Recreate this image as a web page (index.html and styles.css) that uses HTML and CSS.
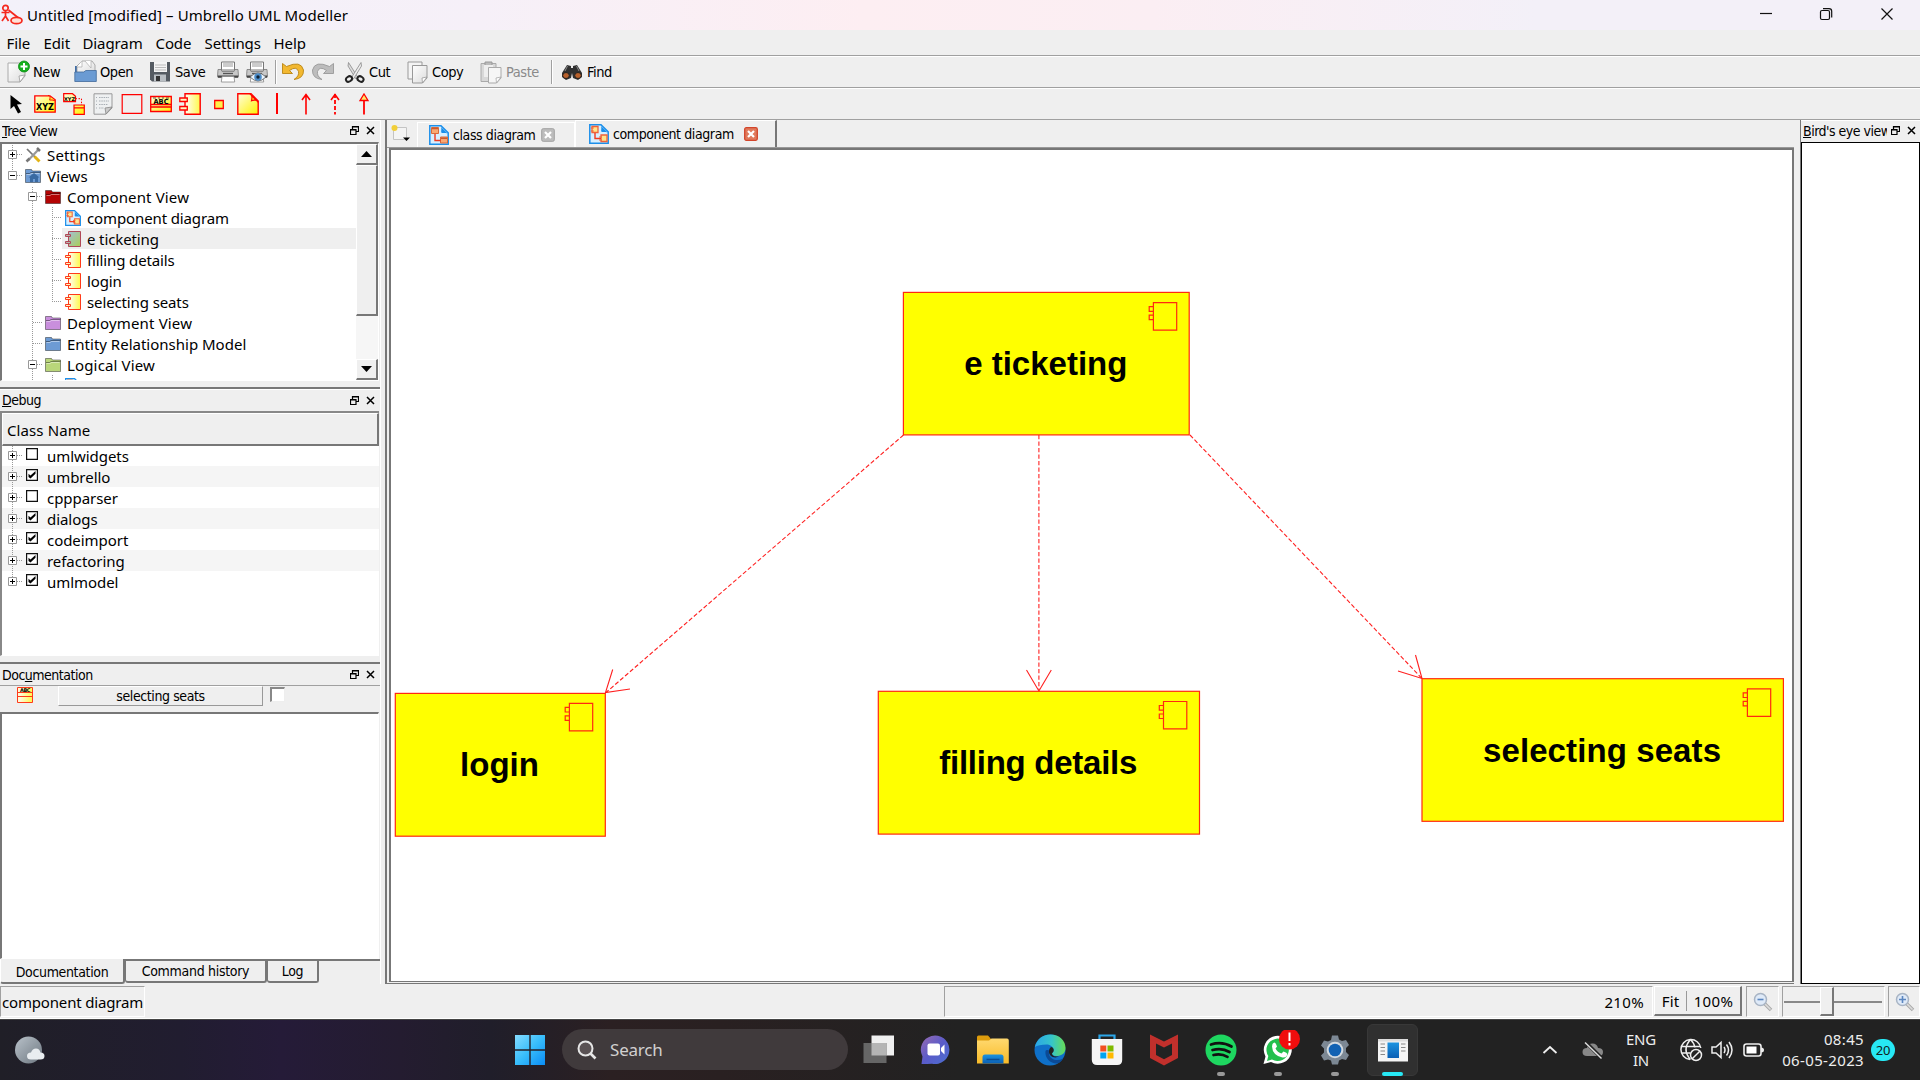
FILE: index.html
```html
<!DOCTYPE html>
<html lang="en">
<head>
<meta charset="utf-8">
<title>Untitled [modified] – Umbrello UML Modeller</title>
<link rel="stylesheet" href="styles.css">
</head>
<body>
<svg class="defs" width="0" height="0">
  <defs>
    <linearGradient id="gy" x1="0" y1="0" x2="1" y2="1"><stop offset="0" stop-color="#fffde0"/><stop offset="1" stop-color="#fff200"/></linearGradient>
    <linearGradient id="gc" x1="0" y1="0" x2="1" y2="0"><stop offset=".2" stop-color="#fffbd8"/><stop offset="1" stop-color="#fff94a"/></linearGradient>
    <linearGradient id="gp" x1="0" y1="0" x2="1" y2="1"><stop offset="0" stop-color="#fff"/><stop offset="1" stop-color="#dcdcdc"/></linearGradient>
    <linearGradient id="gsel" x1="0" y1="0" x2="1" y2="1"><stop offset="0" stop-color="#a3bfd8"/><stop offset="1" stop-color="#a9cf55"/></linearGradient>
    <linearGradient id="gwin" x1="0" y1="0" x2="1" y2="1"><stop offset="0" stop-color="#85dcff"/><stop offset=".5" stop-color="#38bdfb"/><stop offset="1" stop-color="#0a8cf5"/></linearGradient>
    <linearGradient id="gfold" x1="0" y1="0" x2="0" y2="1"><stop offset="0" stop-color="#ffd970"/><stop offset="1" stop-color="#f9bb28"/></linearGradient>
    <linearGradient id="gblue" x1="0" y1="0" x2="0" y2="1"><stop offset="0" stop-color="#1c93e0"/><stop offset="1" stop-color="#0a5fb4"/></linearGradient>
    <linearGradient id="gedge" x1="0" y1="0" x2="1" y2="0"><stop offset="0" stop-color="#2aa6e8"/><stop offset=".55" stop-color="#36c5c9"/><stop offset="1" stop-color="#67dc55"/></linearGradient>
    <linearGradient id="gchat" x1="0" y1="0" x2="1" y2="1"><stop offset="0" stop-color="#9a6bb0"/><stop offset=".5" stop-color="#5a5bc9"/><stop offset="1" stop-color="#4b6fd0"/></linearGradient>
    <linearGradient id="gmoon" x1="0" y1="0" x2="1" y2="1"><stop offset="0" stop-color="#b9c2ca"/><stop offset="1" stop-color="#6d7780"/></linearGradient>
  </defs>
  <symbol id="folder" viewBox="0 0 16 16"><path d="M.5 14.5v-13h6l1 1.5h8v11.500z" fill="currentColor" stroke="#000" stroke-opacity=".4"/><path d="M1 5.500h3.500l1.500-1h9.500" fill="none" stroke="#000" stroke-opacity=".4"/><path d="M1.500 6.500h3.500l1.500-1h8" fill="none" stroke="#fff" stroke-opacity=".45"/></symbol>
  <symbol id="comp" viewBox="0 0 16 16"><path d="M3.500.5h12v15h-12z" fill="url(#gc)" stroke="#ff3a1a"/><path d="M.5 3.500h5v2h-5zM.5 10.500h5v2h-5z" fill="#fff3c0" stroke="#ff3a1a"/></symbol>
  <symbol id="compsel" viewBox="0 0 16 16"><path d="M3.500.5h12v15h-12z" fill="url(#gsel)" stroke="#b04858"/><path d="M.5 3.500h5v2h-5zM.5 10.500h5v2h-5z" fill="#b9b3ab" stroke="#b04858"/></symbol>
  <symbol id="cdiag" viewBox="0 0 20 20"><path d="M.8.8H12l7.200 7v11.400H.8z" fill="#d8efff" stroke="#1c8fea" stroke-width="1.500"/><path d="M11 1c2.500 1 .5 6 1.500 6.800 1.500.8 5-.5 6.700 1.200z" fill="#1c8fea"/><path d="M3 2.500h6v6H3zM12 11h6v6.500h-6z" fill="#ffe48c" stroke="#f0623a" stroke-width="1.300"/><path d="M6 9v5.500h6" fill="none" stroke="#f03a20" stroke-width="1.400"/><path d="M1.800 4h3M1.800 7h3M10 13h3M10 16h3" stroke="#f0623a" stroke-width="1.200"/></symbol>
  <symbol id="kdiag" viewBox="0 0 20 20"><path d="M.8.8H12l7.200 7v11.400H.8z" fill="#d8efff" stroke="#1c8fea" stroke-width="1.500"/><path d="M11 1c2.500 1 .5 6 1.500 6.800 1.500.8 5-.5 6.700 1.200z" fill="#1c8fea"/><path d="M2.500 2.500h7v6h-7zM11.500 12h7v6h-7z" fill="#f9a873" stroke="#d96a3a"/><path d="M3 3.500h6M12 13.200h6" stroke="#c95a30" stroke-width="1.500"/><path d="M6 9v6.500h5.500" fill="none" stroke="#f03a20" stroke-width="1.400"/></symbol>
  <symbol id="plus" viewBox="0 0 9 9"><path d="M.5.5h8v8h-8z" fill="#fff" stroke="#999"/><path d="M2 4.500h5M4.500 2v5" stroke="#000"/></symbol>
  <symbol id="minus" viewBox="0 0 9 9"><path d="M.5.5h8v8h-8z" fill="#fff" stroke="#999"/><path d="M2 4.500h5" stroke="#000"/></symbol>
  <symbol id="float" viewBox="0 0 9 9"><path d="M2.500 3V.5h6v5H6M2.500 1h6" fill="none" stroke="#000" stroke-width="1.200"/><path d="M.5 3.500h5.500v5H.5zM.5 4h5.500" fill="none" stroke="#000" stroke-width="1.200"/></symbol>
  <symbol id="cross" viewBox="0 0 9 9"><path d="M1 1l7 7M8 1L1 8" stroke="#000" stroke-width="1.500"/></symbol>
  <symbol id="check" viewBox="0 0 12 12"><path d="M.6.6h10.800v10.800H.6z" fill="#fff" stroke="#111" stroke-width="1.200"/><path d="M2.500 4.800v3.200l2 1.500L9.500 4.700V2L4.500 6.500z" fill="#000"/></symbol>
  <symbol id="uncheck" viewBox="0 0 12 12"><path d="M.6.6h10.800v10.800H.6z" fill="#fff" stroke="#111" stroke-width="1.200"/></symbol>
  <symbol id="printer" viewBox="0 0 22 22"><path d="M4.500 1h13v8h-13z" fill="#fff" stroke="#777"/><path d="M6 3h10M6 5h10" stroke="#999"/><path d="M1 8.500h3l1 2h12l1-2h3l.5 7h-21z" fill="#c8c8c8" stroke="#777" stroke-width=".8"/><path d="M.8 14.500h20.400v2.300H.8z" fill="#444"/><path d="M5 15.500h12l.7 5.500H4.300z" fill="#fff" stroke="#888" stroke-width=".8"/><path d="M6 12.500h10" stroke="#555" stroke-width="1.300"/></symbol>
  <symbol id="note" viewBox="0 0 22 22"><path d="M.8.8H14L21.200 8v13.200H.8z" fill="url(#gy)" stroke="red" stroke-width="1.400"/><path d="M13 .8c3 1 2 4 1.500 7 2-1 6-1 6.700 1.500z" fill="#ffee20" stroke="red" stroke-width="1.200"/></symbol>
  <symbol id="lens" viewBox="0 0 20 20"><path d="M11.500 11.500l6.500 6.500" stroke="#aaa" stroke-width="3.600"/><path d="M12 12l5.500 5.500" stroke="#ddd" stroke-width="1.600"/><circle cx="7.500" cy="7.500" r="6" fill="#dfeaf8" stroke="#a8b4c4" stroke-width="1.500"/></symbol>
</svg>

<header class="titlebar">
  <svg class="logo" width="22" height="22" viewBox="0 0 22 22" fill="none" stroke="#f5281e" stroke-width="1.700"><circle cx="4.500" cy="4" r="2.700"/><path d="M4.500 7v5M.5 8.500h8M1 17l3.500-5 3 5M7.500 6l10 8"/><ellipse cx="15.500" cy="16.500" rx="5.500" ry="3.200" fill="#ffe0d8"/></svg>
  <span class="title">Untitled [modified] – Umbrello UML Modeller</span>
  <svg class="wbtn" width="160" height="30" viewBox="0 0 160 30" fill="none" stroke="#111" stroke-width="1.200"><path d="M20 13.500h12"/><path d="M83 8.700h6q2.700 0 2.700 2.700v6"/><rect x="80.500" y="10.500" width="9" height="9" rx="1.500"/><path d="M141.500 8.500l11 11M152.500 8.500l-11 11"/></svg>
</header>

<nav class="menubar"><span>File</span><span>Edit</span><span>Diagram</span><span>Code</span><span>Settings</span><span>Help</span></nav>

<div class="toolbar main">
  <svg width="24" height="24" viewBox="0 0 24 24"><path d="M1 3h17v13l-5 6H1z" fill="url(#gp)" stroke="#aaa"/><path d="M18 15l-6 1 1 6z" fill="#fff" stroke="#999" stroke-width=".8"/><circle cx="17" cy="6.500" r="5.500" fill="#14b01c" stroke="#0a8a12" stroke-width=".8"/><path d="M17 3v7M13.500 6.500h7" stroke="#fff" stroke-width="2"/></svg><span>New</span>
  <svg width="24" height="24" viewBox="0 0 24 24"><path d="M1 21V6h6l2 3h11v12z" fill="#3f6ea8"/><path d="M3 14V6l5-5h10l3 4v9z" fill="url(#gp)" stroke="#999" stroke-width=".8"/><path d="M8 1v6H3M11 1l6 7V1" fill="#fff" stroke="#aaa" stroke-width=".7"/><path d="M.8 21.500V12h9l2-1.500h10.500v11z" fill="#6b9bd3" stroke="#41699b" stroke-width=".8"/></svg><span>Open</span>
  <svg width="24" height="24" viewBox="0 0 24 24"><path d="M1 2h20v19.500H3l-2-2z" fill="#555b62"/><path d="M5 2h13v10H5z" fill="#f4f4f4"/><path d="M6 5h11M6 7.500h11M6 10h11" stroke="#bbb"/><path d="M5 14.500h12v7H5z" fill="#b9bec3"/><path d="M7 16h4v5H7z" fill="#333"/></svg><span>Save</span>
  <svg width="22" height="22"><use href="#printer"/></svg>
  <svg width="22" height="22" viewBox="0 0 22 22"><use href="#printer" width="22" height="22"/><path d="M4 16q8-8 16 0-8 8-16 0z" fill="#e8f2fb" stroke="#555" stroke-width=".8"/><circle cx="12" cy="16" r="3.800" fill="#4c8cc8"/><circle cx="12" cy="16" r="1.700" fill="#123"/></svg>
  <i class="sep"></i>
  <svg width="24" height="22" viewBox="0 0 24 22"><path d="M1.500 2.500v10h10L8.500 9.500q7-5 9 1 1 4.500-4.500 8 10-1 9.500-9.500Q20-1 5.500 5.500z" fill="#f2b830" stroke="#b98412" stroke-width=".9"/></svg>
  <svg width="24" height="22" viewBox="0 0 24 22"><path d="M22.500 2.500v10h-10l3-3q-7-5-9 1-1 4.500 4.500 8Q1 17.500 1.500 9 4-1 18.500 5.500z" fill="#bdbdbd" stroke="#999" stroke-width=".9"/></svg>
  <svg width="22" height="23" viewBox="0 0 22 23"><path d="M4.500 1.500l9.500 15-2 1.500L4 5z" fill="#ddd" stroke="#888" stroke-width=".8"/><path d="M17 1.500l-9.500 15 2 1.500L17.500 5z" fill="#eee" stroke="#888" stroke-width=".8"/><ellipse cx="5" cy="18" rx="3.200" ry="2.500" transform="rotate(-35 5 18)" fill="none" stroke="#222" stroke-width="2"/><ellipse cx="16.500" cy="18" rx="3.200" ry="2.500" transform="rotate(35 16.500 18)" fill="none" stroke="#222" stroke-width="2"/></svg><span>Cut</span>
  <svg width="22" height="23" viewBox="0 0 22 23"><path d="M1 1h14v17H1z" fill="#f4f4f4" stroke="#999"/><path d="M5.500 4.500H20V17l-4.500 5h-10z" fill="url(#gp)" stroke="#999"/><path d="M20 16l-5 1 .5 5z" fill="#fff" stroke="#999" stroke-width=".8"/></svg><span>Copy</span>
  <svg width="22" height="23" viewBox="0 0 22 23"><path d="M1 2.500h15v18H1z" fill="#d8d8d8" stroke="#aaa"/><path d="M5 1h7v4H5z" fill="#bbb" stroke="#999"/><path d="M4 4h9v12H4z" fill="#eee"/><path d="M8.500 6.500H21V17l-4.500 5h-8z" fill="#f6f6f6" stroke="#aaa"/><path d="M21 16l-5 1 .5 5z" fill="#fff" stroke="#aaa" stroke-width=".8"/></svg><span class="off">Paste</span>
  <i class="sep"></i>
  <svg width="22" height="18" viewBox="0 0 22 18"><path d="M1 10L6 2l4 1v2h2V3l4-1 5 8v4l-4 3-5-2-1-5-1 5-5 2-4-3z" fill="#303030"/><path d="M6.500 3L4 8M15.500 3L18 8" stroke="#888"/><ellipse cx="5" cy="12.500" rx="3.300" ry="3" fill="#b8612c" stroke="#222"/><ellipse cx="17" cy="12.500" rx="3.300" ry="3" fill="#b8612c" stroke="#222"/></svg><span>Find</span>
</div>

<div class="toolbar uml">
  <svg viewBox="0 0 22 22"><path d="M5.500 2v14l3.500-3 4 7.500 3-1.500-4-7.500 5-.5z" fill="#000"/></svg>
  <svg viewBox="0 0 22 22"><path d="M.8 2.800H16l5.200 4v12.400H.8z" fill="url(#gy)" stroke="red" stroke-width="1.300"/><path d="M14 2.500c3 0 2 3 1.500 4.500 2 0 5 0 5.700 1" fill="#ffee20" stroke="red"/><text x="11" y="17" text-anchor="middle" textLength="18" lengthAdjust="spacingAndGlyphs" class="glyphtext">XYZ</text></svg>
  <svg viewBox="0 0 22 22"><path d="M.7.700H9.500l3 2.500v5.500H.7zM11 12h10.300v9.300H11zM11 14.800h10.300" fill="url(#gy)" stroke="red" stroke-width="1.200"/><path d="M12.500 5.700h6V12" fill="none" stroke="red" stroke-dasharray="1.500 1.500"/><text x="6.500" y="8" text-anchor="middle" class="glyphtext tiny">XYZ</text></svg>
  <svg viewBox="0 0 22 22"><path d="M2 .8h18V15l-6 6.200H2z" fill="#eef0f1" stroke="#999"/><path d="M20 14l-7 1 1 6z" fill="#ccc" stroke="#888" stroke-width=".8"/><path d="M7 4.500h10M7 8h10M7 11.500h9M7 15h5M4 4.500h1M4 8h1M4 11.500h1M4 15h1" stroke="#a8aeb4" stroke-dasharray="1.500 .8"/></svg>
  <svg viewBox="0 0 22 22"><path d="M1.200 1.700h19.600v18.600H1.200z" fill="none" stroke="red" stroke-width="1.200"/></svg>
  <svg viewBox="0 0 22 22"><path d="M.7 3.500h20.600v15H.7zM.7 11.500h20.600M.7 14h20.600" fill="url(#gy)" stroke="red" stroke-width="1.300"/><text x="11" y="10.500" text-anchor="middle" textLength="15" lengthAdjust="spacingAndGlyphs" class="glyphtext small">ABC</text><path d="M3 5h3M16 5h3M8 5h2M12 5h2" stroke="#333" stroke-width=".8"/></svg>
  <svg viewBox="0 0 22 22"><path d="M6 .8h15.200v20.400H6z" fill="url(#gc)" stroke="red" stroke-width="1.400"/><path d="M.8 5h7.500v3.500H.8zM.8 13.500h7.500V17H.8z" fill="#fff6c0" stroke="red" stroke-width="1.300"/></svg>
  <svg viewBox="0 0 22 22"><path d="M6.700 7.500h8.600v8H6.700z" fill="#fff04a" stroke="red" stroke-width="1.300"/></svg>
  <svg viewBox="0 0 22 22"><use href="#note"/></svg>
  <svg viewBox="0 0 22 22"><path d="M11 0v21" stroke="red" stroke-width="2"/></svg>
  <svg viewBox="0 0 22 22"><path d="M11 1v20.500M7 7L11 1.500 15 7" fill="none" stroke="red" stroke-width="1.600"/></svg>
  <svg viewBox="0 0 22 22"><path d="M11 1v20.500" stroke="red" stroke-width="1.800" stroke-dasharray="4 2"/><path d="M7 7L11 1.500 15 7" fill="none" stroke="red" stroke-width="1.600"/></svg>
  <svg viewBox="0 0 22 22"><path d="M11 8v13.500" stroke="red" stroke-width="1.800"/><path d="M7 7.500L11 1l4 6.500z" fill="#ffe96a" stroke="red" stroke-width="1.300"/></svg>
</div>

<main class="work">
  <aside class="left">
    <div class="dockhead tvh"><span><u>T</u>ree View</span><svg width="9" height="9"><use href="#float"/></svg><svg width="9" height="9"><use href="#cross"/></svg></div>
    <div class="treebox">
      <div class="tree">
        <svg class="guides" width="60" height="237" viewBox="2 144 60 237"><path d="M12.500 145v31M32.500 187v194M52.500 207v95M52.500 375v6M17 154.500h5M17 175.500h5M37 196.500h5M52 217.500h10M52 238.500h10M52 259.500h10M52 280.500h10M52 301.500h10M33 322.500h9M33 343.500h9M37 364.500h5" stroke="#999" stroke-dasharray="1 1"/><use href="#plus" x="8" y="150" width="9" height="9"/><use href="#minus" x="8" y="171" width="9" height="9"/><use href="#minus" x="28" y="192" width="9" height="9"/><use href="#minus" x="28" y="360" width="9" height="9"/></svg>
        <div class="rows">
          <div class="row d0"><svg width="16" height="16" viewBox="0 0 16 16"><path d="M2 2l12 12" stroke="#777" stroke-width="1.700"/><path d="M14 2L3 13.500" stroke="#999" stroke-width="2.200"/><path d="M9.500 9.500l5 5" stroke="#e3b416" stroke-width="3"/><path d="M1.500 14.500l3-3M12 1l3 3" stroke="#777" stroke-width="2.500"/></svg><span>Settings</span></div>
          <div class="row d0 c-blue"><svg width="16" height="16" viewBox="0 0 16 16"><use href="#folder"/><path d="M5 14V9.500H3.500L9 5l5.500 4.500H13V14h-3v-3H8v3z" fill="#3a6aa2"/></svg><span>Views</span></div>
          <div class="row d1 c-red"><svg width="16" height="16"><use href="#folder"/></svg><span>Component View</span></div>
          <div class="row d2"><svg width="16" height="16"><use href="#cdiag"/></svg><span>component diagram</span></div>
          <div class="row d2 sel"><svg width="16" height="16"><use href="#compsel"/></svg><span>e ticketing</span></div>
          <div class="row d2"><svg width="16" height="16"><use href="#comp"/></svg><span>filling details</span></div>
          <div class="row d2"><svg width="16" height="16"><use href="#comp"/></svg><span>login</span></div>
          <div class="row d2"><svg width="16" height="16"><use href="#comp"/></svg><span>selecting seats</span></div>
          <div class="row d1 c-purple"><svg width="16" height="16"><use href="#folder"/></svg><span>Deployment View</span></div>
          <div class="row d1 c-blue"><svg width="16" height="16"><use href="#folder"/></svg><span class="tight">Entity Relationship Model</span></div>
          <div class="row d1 c-green"><svg width="16" height="16"><use href="#folder"/></svg><span>Logical View</span></div>
          <div class="row d2"><svg width="16" height="16"><use href="#kdiag"/></svg><span>class diagram</span></div>
        </div>
      </div>
      <div class="scroll"><b><svg width="11" height="6"><path d="M0 6L5.500 0 11 6z"/></svg></b><b class="thumb"></b><i></i><b><svg width="11" height="6"><path d="M0 0L5.500 6 11 0z"/></svg></b></div>
    </div>
    <div class="dockhead dbh"><span><u>D</u>ebug</span><svg width="9" height="9"><use href="#float"/></svg><svg width="9" height="9"><use href="#cross"/></svg></div>
    <div class="debugbox">
      <div class="colhead">Class Name</div>
      <div class="tree">
        <svg class="guides" width="24" height="147" viewBox="0 0 24 147"><path d="M10.500 1v138M15 10.500h5M15 31.500h5M15 52.500h5M15 73.500h5M15 94.500h5M15 115.500h5M15 136.500h5" stroke="#999" stroke-dasharray="1 1"/><use href="#plus" x="6" y="6" width="9" height="9"/><use href="#plus" x="6" y="27" width="9" height="9"/><use href="#plus" x="6" y="48" width="9" height="9"/><use href="#plus" x="6" y="69" width="9" height="9"/><use href="#plus" x="6" y="90" width="9" height="9"/><use href="#plus" x="6" y="111" width="9" height="9"/><use href="#plus" x="6" y="132" width="9" height="9"/></svg>
        <div class="rows striped">
          <div class="row"><svg width="12" height="12"><use href="#uncheck"/></svg><span>umlwidgets</span></div>
          <div class="row"><svg width="12" height="12"><use href="#check"/></svg><span>umbrello</span></div>
          <div class="row"><svg width="12" height="12"><use href="#uncheck"/></svg><span>cppparser</span></div>
          <div class="row"><svg width="12" height="12"><use href="#check"/></svg><span>dialogs</span></div>
          <div class="row"><svg width="12" height="12"><use href="#check"/></svg><span>codeimport</span></div>
          <div class="row"><svg width="12" height="12"><use href="#check"/></svg><span>refactoring</span></div>
          <div class="row"><svg width="12" height="12"><use href="#check"/></svg><span>umlmodel</span></div>
        </div>
      </div>
    </div>
    <div class="dockhead doh"><span>Doc<u>u</u>mentation</span><svg width="9" height="9"><use href="#float"/></svg><svg width="9" height="9"><use href="#cross"/></svg></div>
    <div class="docrow"><svg width="16" height="16" viewBox="0 0 16 16"><path d="M.5.5h15v15H.5zM.5 5.500h15M.5 9.500h15" fill="url(#gc)" stroke="#ff3a1a"/><text x="8" y="4.800" text-anchor="middle" class="glyphtext tiny">ABC</text></svg><span class="docname">selecting seats</span><i class="box"></i></div>
    <div class="doctext"></div>
    <div class="tabs"><span class="on">Documentation</span><span>Command history</span><span>Log</span></div>
  </aside>

  <section class="center">
    <div class="dtabs">
      <svg width="20" height="20" viewBox="0 0 20 20"><path d="M2.500 3.500h13v10l-2 2h-11z" fill="#f4f4f4" stroke="#c4c4c4"/><circle cx="3.500" cy="4" r="3" fill="#f2cf38"/><path d="M12 13.500h7l-3.500 3.500z"/></svg>
      <div class="dtab"><svg width="20" height="20"><use href="#kdiag"/></svg><span>class diagram</span><svg width="14" height="14" viewBox="0 0 14 14"><rect x=".7" y=".7" width="12.600" height="12.600" rx="1.500" fill="#bdbdbd" stroke="#a0a0a0"/><path d="M4 4l6 6M10 4l-6 6" stroke="#fff" stroke-width="2.200"/></svg></div>
      <div class="dtab on"><svg width="20" height="20"><use href="#cdiag"/></svg><span>component diagram</span><svg width="14" height="14" viewBox="0 0 14 14"><rect x=".7" y=".7" width="12.600" height="12.600" rx="1.500" fill="#e07a5c" stroke="#d2452a" stroke-width="1.300"/><path d="M4 4l6 6M10 4l-6 6" stroke="#fff" stroke-width="2.200"/></svg></div>
    </div>
    <div class="canvas">
      <svg width="1401" height="831" viewBox="391 150 1401 831">
        <g fill="none" stroke="#ff2020" stroke-width="1.100">
          <path stroke-dasharray="4.300 2.200" d="M903.500 435L606 692.500M1038.900 435v255M1190 435l232 243.500"/>
          <path d="M612.700 669.500L605.500 692.500l24.500-3.500M1026.500 670l12.400 21 12.400-21M1415.500 655l6.500 23.500-24-7.500"/>
        </g>
        <g fill="#ff0" stroke="#ff2a10" stroke-width="1.200">
          <rect x="903.400" y="292.400" width="285.800" height="142.500"/>
          <rect x="395.300" y="693.400" width="210" height="142.800"/>
          <rect x="878.300" y="691.300" width="321.200" height="142.800"/>
          <rect x="1422" y="678.700" width="361.400" height="142.600"/>
          <path id="cg" d="M1153.400 302.700h23.300v27.400h-23.300zM1149.200 306.700h4.200v4.600h-4.200zM1149.200 315.200h4.200v4.500h-4.200z"/>
          <use href="#cg" x="-584" y="400.700"/><use href="#cg" x="10.100" y="398.800"/><use href="#cg" x="594" y="386.200"/>
        </g>
        <g class="cname" text-anchor="middle">
          <text x="1045.800" y="374.600">e ticketing</text><text x="499.500" y="775.600">login</text><text x="1038.300" y="773.600" textLength="198">filling details</text><text x="1602" y="761.600" textLength="238">selecting seats</text>
        </g>
      </svg>
    </div>
  </section>

  <aside class="right">
    <div class="dockhead bvh"><span><u>B</u>ird's eye view</span><svg width="9" height="9"><use href="#float"/></svg><svg width="9" height="9"><use href="#cross"/></svg></div>
    <div class="bird"></div>
  </aside>
</main>

<footer class="status">
  <span class="cell name">component diagram</span>
  <span class="cell zoom">210%</span>
  <span class="fit"><span>Fit</span><span>100%</span></span>
  <span class="cell zo"><svg width="20" height="20" viewBox="0 0 20 20"><use href="#lens"/><path d="M4.500 7.500h6" stroke="#5b86c0" stroke-width="1.600"/></svg></span>
  <span class="cell slider"><i></i></span>
  <span class="cell zi"><svg width="20" height="20" viewBox="0 0 20 20"><use href="#lens"/><path d="M4 7.500h7M7.500 4v7" stroke="#5b86c0" stroke-width="1.600"/></svg></span>
</footer>

<div class="taskbar">
  <div class="weather"><svg width="32" height="32" viewBox="0 0 32 32"><circle cx="14.500" cy="16" r="13.500" fill="url(#gmoon)"/><path d="M17 25.500q-4 0-4-3.500t4-3.500q1.500-4 5-4t4.500 4q4 0 4 3.500t-4 3.500z" fill="#e9edf0"/></svg></div>
  <div class="app"><svg width="30" height="30" viewBox="0 0 30 30" fill="url(#gwin)"><path d="M0 0h14.300v14.300H0zM15.700 0H30v14.300H15.700zM0 15.700h14.300V30H0zM15.700 15.700H30V30H15.700z"/></svg></div>
  <div class="search"><svg width="20" height="20" viewBox="0 0 20 20" fill="none" stroke="#e6e6e6" stroke-width="2"><circle cx="8.500" cy="8.500" r="7" fill="#5a5254"/><path d="M13.500 13.500l5 5" stroke-width="2.600"/></svg><span>Search</span></div>
  <div class="apps">
    <div class="app"><svg width="32" height="32" viewBox="0 0 32 32"><path d="M8.500 1.500H31v20H8.500z" fill="#f0f0f0"/><path d="M.5 9h23v20H.5z" fill="#666"/><path d="M8.500 9h15v12.500h-15z" fill="#b5b5b5"/></svg></div>
    <div class="app"><svg width="32" height="32" viewBox="0 0 32 32"><path d="M1.500 30l1-7.500A14.300 14.300 0 1 1 12 29.700q-5 .3-10.500.3z" fill="url(#gchat)"/><rect x="7.500" y="9.500" width="12.500" height="12" rx="2" fill="#fff"/><path d="M21 14l3.500-3.500v10L21 17z" fill="#fff"/></svg></div>
    <div class="app"><svg width="32" height="32" viewBox="0 0 32 32"><path d="M0 8V3q0-1.500 1.500-1.500H11L14 5v5H0z" fill="#dd9c0c"/><path d="M0 6.500h12l2.500-2H30q1.800 0 1.800 2v23H0z" fill="url(#gfold)"/><path d="M5.500 29.500V23q0-2.500 2.500-2.500h16q2.500 0 2.500 2.500v6.500z" fill="url(#gblue)"/><path d="M9.500 25.500h13" stroke="#0a4d94" stroke-width="1.500"/></svg></div>
    <div class="app"><svg width="32" height="32" viewBox="0 0 32 32"><circle cx="16" cy="16" r="15.500" fill="#0f70c8"/><path d="M.8 13C3 4.500 9.500.5 16.500.5c9 0 15 6.300 15 13.500 0 6-5 8-9 8-3.500 0-5-1.500-4.500-3 1-1 1.500-1.500 1.500-3 0-3-3-5.500-7-5.500-5 0-9.500 1-11.700 2.500z" fill="url(#gedge)"/><path d="M11.500 17c-1 7 5 12.500 11 12.500 3 0 5.500-3 6.500-5-4 2-8 2-11 0-3-2.200-3.500-4.500-2.500-8-2-1-3.500-.5-4 .5z" fill="#0b4a96"/><path d="M17.500 13q3 1 2 4.500l-1.500 2c0 2 2.500 4 7 2.500-3 3-10.500 1-10-5 .2-2 1-3.500 2.500-4z" fill="#222"/></svg></div>
    <div class="app"><svg width="32" height="32" viewBox="0 0 32 32"><path d="M8.500 7V1.500h15V7" fill="none" stroke="#2ba6e8" stroke-width="2.200"/><path d="M.8 5h30.400v21q0 5-5 5H6q-5 0-5.200-5z" fill="#f5f5f5"/><path d="M9.300 11.500h6v6h-6z" fill="#f25022"/><path d="M16.500 11.500h6v6h-6z" fill="#7fba00"/><path d="M9.300 18.500h6v6h-6z" fill="#00a4ef"/><path d="M16.500 18.500h6v6h-6z" fill="#ffb900"/></svg></div>
    <div class="app"><svg width="32" height="32" viewBox="0 0 32 32"><path d="M2 .5l14 7 14-7V24l-14 7.500L2 24zM8 9.500v11.500l8 4.300 8-4.300V9.500l-8 4z" fill="#c1302c" fill-rule="evenodd"/></svg></div>
    <div class="app run"><svg width="32" height="32" viewBox="0 0 32 32"><circle cx="16" cy="16" r="15.500" fill="#1ed760"/><path d="M6 10.500q11-3.500 20.500 2M7.500 16q9.500-2.500 17 2M8.500 21q7.500-2 14 1.800" fill="none" stroke="#111" stroke-width="2.700" stroke-linecap="round"/></svg></div>
    <div class="app run"><svg class="wa" width="40" height="40" viewBox="0 0 40 40"><path d="M3.500 34l2-7.500A14 14 0 1 1 11 32z" fill="#fff"/><path d="M7 31l1.300-5A11.200 11.200 0 1 1 12 29.500z" fill="#23c04e"/><path d="M12.500 14q2-3 3.500 0l1 2.500-1.500 2q2 4 6 5l2-2q3.500 1 4 2.500-1 4-5 3.500-10-2-10.500-11z" fill="#fff"/><circle cx="29.500" cy="9" r="10.500" fill="#f00d0d"/><path d="M29.500 2.500v8.500M29.500 13v2.500" stroke="#fff" stroke-width="2"/></svg></div>
    <div class="app run"><svg width="32" height="32" viewBox="0 0 32 32"><path d="M13 1.500h6l1 4 3 1.500 4-1 3 5-3 3v4l3 3-3 5-4-1-3 1.500-1 4h-6l-1-4L9 25.500l-4 1-3-5 3-3v-4l-3-3 3-5 4 1 3-1.500z" fill="#7c8894"/><circle cx="16" cy="16" r="8.300" fill="#d3dae0"/><circle cx="16" cy="16" r="6.300" fill="#1262b3"/></svg></div>
    <div class="app run active"><svg width="32" height="32" viewBox="0 0 32 32"><path d="M1 5h30v22.500H1z" fill="#f4f4f4"/><path d="M1 5h30v2.500H1z" fill="#ddd"/><path d="M10.500 8.500H22V24H10.500z" fill="url(#gblue)"/><path d="M3.500 10H8M3.500 13.500H8M3.500 17H8M3.500 20.500H8M24 10h4.500M24 13.500h4.500M24 17h4.500" stroke="#888"/></svg></div>
  </div>
  <div class="tray">
    <svg width="16" height="12" viewBox="0 0 16 12"><path d="M1.500 9L8 3l6.500 6" fill="none" stroke="#eee" stroke-width="1.800"/></svg>
    <svg class="cloud" width="24" height="20" viewBox="0 0 24 20"><path d="M6 16q-4.500 0-4.500-4t4.500-4q1-4.500 5.500-4.500T17 8q5 0 5 4t-4 4z" fill="#888"/><path d="M4 1.500l17 17" stroke="#222" stroke-width="3.500"/><path d="M4 2.500l16.500 16" stroke="#ddd" stroke-width="1.500"/></svg>
    <span class="lang">ENG<br>IN</span>
    <svg class="net" width="24" height="24" viewBox="0 0 24 24" fill="none" stroke="#eee" stroke-width="1.500"><path d="M11 21.500A10 10 0 1 1 21.800 10M2 8.500h19M2 15h9M11.500 1.500q-9 10 0 20M11.500 1.500q4 4 4.300 8"/><circle cx="17" cy="17" r="5.500"/><path d="M13.200 20.800l7.600-7.600"/></svg>
    <svg class="vol" width="22" height="20" viewBox="0 0 22 20" fill="none" stroke="#eee" stroke-width="1.500"><path d="M1 7h4l5-4.500v15L5 13H1z"/><path d="M13 7q2 3 0 6M15.500 4.500q4 5.500 0 11M18 2q6 8 0 16"/></svg>
    <svg class="bat" width="22" height="14" viewBox="0 0 22 14"><rect x="1" y="1" width="17" height="12" rx="2.500" fill="none" stroke="#eee" stroke-width="1.600"/><rect x="3.500" y="3.500" width="10" height="7" fill="#fff"/><path d="M18 4.500q3 0 3 2.500t-3 2.500z" fill="#eee"/></svg>
    <span class="clock">08:45<br>06-05-2023</span>
    <span class="badge">20</span>
  </div>
</div>
</body>
</html>
```

FILE: styles.css
```css
* { box-sizing: border-box; }
body { margin: 0; width: 1920px; height: 1080px; overflow: hidden; display: flex; flex-direction: column; background: #efefef; color: #000; font: 15px/21px "Noto Sans", sans-serif; }
svg { display: block; flex: none; }
.defs { position: absolute; }
.glyphtext { font: bold 9px "DejaVu Sans", sans-serif; }
.glyphtext.small { font-size: 7px; }
.glyphtext.tiny { font-size: 5px; }

.titlebar { height: 30px; flex: none; display: flex; background: linear-gradient(90deg, #f3f1fa 0, #f6f0f8 25%, #fdeef2 45%, #fbeef3 60%, #f3f0f8 80%); }
.logo { margin: 4px 3px 0 1px; }
.title { line-height: 31px; letter-spacing: 0.100px; flex: 1; padding-left: 1px; }
.wbtn { margin-right: 20px; }

.menubar { height: 26px; flex: none; display: grid; grid-template-columns: 37px 39px 73px 49px 69px 60px; padding-left: 6.500px; line-height: 27px; letter-spacing: -0.100px; border-bottom: 1px solid #a0a0a0; }

.toolbar { height: 32px; flex: none; border-top: 1px solid #fff; border-bottom: 1px solid #a0a0a0; display: grid; align-items: center; white-space: nowrap; }
.main { grid-template-columns: 26px 41px 26px 49px 26px 42px 29px 29px 6px 30px 33px 25px 38px 25px 48px 26px 45px 10px 26px 60px; padding-left: 7px; font: 14.500px/28px "DejaVu Sans Condensed", "DejaVu Sans", sans-serif; letter-spacing: -0.450px; }
.off { color: #8a8a8a; }
.sep { width: 2px; height: 24px; border-left: 1px solid #a0a0a0; border-right: 1px solid #fff; }
.uml { grid-template-columns: repeat(13, 29px); justify-items: center; padding-left: 1px; }
.uml svg { width: 22px; height: 22px; }

.work { height: 864px; flex: none; display: grid; grid-template-columns: 381px 4px 1409px 6px 120px; }
.left { grid-column: 1; display: flex; flex-direction: column; border-right: 1px solid #fff; }
.dockhead { display: grid; grid-template-columns: 1fr 16px 14px; flex: none; align-items: center; padding: 0 0 2px 2px; white-space: nowrap; overflow: hidden; font: 14px/18px "DejaVu Sans Condensed", "DejaVu Sans", sans-serif; letter-spacing: -0.500px; border-top: 1px solid #fff; }
.dockhead span { overflow: hidden; }
.tvh { height: 22px; }
.treebox { height: 239px; flex: none; display: flex; border: 1px solid #fff; border-top: 2px solid #777; border-left: 2px solid #777; margin-right: 1px; background: #fff; }
.tree { display: grid; flex: 1; min-width: 0; }
.guides { grid-area: 1 / 1; z-index: 1; }
.rows { grid-area: 1 / 1; height: 236px; overflow: hidden; letter-spacing: 0.150px; }
.row { height: 21px; display: flex; align-items: center; white-space: nowrap; }
.row span { padding-top: 2px; }
.row svg { margin-right: 6px; color: var(--f); }
.tight { letter-spacing: 0; }
.d0 { padding-left: 23px; }
.d1 { padding-left: 43px; }
.d2 { margin-left: 60px; padding-left: 3px; letter-spacing: -0.120px; }
.sel { background: #efefef; }
.c-blue { --f: #6d9bd4; }
.c-red { --f: #b40404; }
.c-purple { --f: #c98fdd; }
.c-green { --f: #b9d67a; }
.scroll { width: 22px; flex: none; display: flex; flex-direction: column; background: #f6f6f6; }
.scroll b { height: 21px; flex: none; background: #efefef; border: 1px solid #fff; border-right: 2px solid #777; border-bottom: 2px solid #777; display: grid; place-items: center; }
.scroll .thumb { height: 151px; }
.scroll i { flex: 1; }
.dbh { height: 24px; margin-top: 6px; border-top: 2px solid #777; box-shadow: inset 0 1px #fff; padding-bottom: 0; }
.debugbox { height: 245px; flex: none; margin-right: 1px; border-top: 2px solid #888; border-left: 2px solid #888; border-bottom: 1px solid #fff; background: #fff; display: flex; flex-direction: column; }
.colhead { height: 33px; flex: none; margin-bottom: -1px; border: 1px solid #fff; border-right: 2px solid #777; border-bottom: 2px solid #777; background: #efefef; padding-left: 4px; line-height: 32px; letter-spacing: 0.100px; }
.debugbox .tree { flex: none; height: 147px; }
.striped { height: 147px; letter-spacing: -0.050px; }
.striped .row { padding-left: 24px; }
.striped .row:nth-child(even) { background: #f5f5f5; }
.striped .row svg { margin: 0 9px 3px 0; }
.doh { height: 24px; margin-top: 6px; border-top: 2px solid #777; border-bottom: 1px solid #a0a0a0; padding-bottom: 0; }
.docrow { height: 26px; flex: none; display: grid; grid-template-columns: 41px 205px 7px 15px; padding-left: 17px; align-items: start; font: 14px/19px "DejaVu Sans Condensed", "DejaVu Sans", sans-serif; letter-spacing: -0.400px; }
.docrow svg { margin-top: 1px; }
.docname { height: 20px; text-align: center; border: 1px solid #fff; border-right-color: #999; border-bottom-color: #999; }
.box { grid-column: 4; width: 15px; height: 15px; margin-top: 1px; background: #fff; border: 1px solid #eee; border-top: 2px solid #888; border-left: 2px solid #888; }
.doctext { flex: 1; margin-right: 1px; background: #fff; border: 1px solid #fff; border-top: 2px solid #777; border-left: 2px solid #777; }
.tabs { height: 25px; flex: none; display: flex; border-top: 2px solid #777; align-items: start; font: 14px/21px "DejaVu Sans Condensed", "DejaVu Sans", sans-serif; letter-spacing: -0.300px; }
.tabs span { height: 22px; width: 142px; text-align: center; border: solid #777; border-width: 0 2px 2px 1px; border-radius: 0 0 3px 3px; }
.tabs .on { width: 125px; height: 25px; margin-top: -2px; line-height: 26px; background: #efefef; border-left-color: #fff; letter-spacing: -0.350px; }
.tabs span:last-child { width: 52px; }

.center { grid-column: 3; display: flex; flex-direction: column; border: solid #777; border-width: 0 0 1px 2px; }
.dtabs { height: 28px; flex: none; display: grid; grid-template-columns: 26px 158px 202px; padding-left: 4px; align-items: center; border-bottom: 1px solid #999; font: 14px/22px "DejaVu Sans Condensed", "DejaVu Sans", sans-serif; letter-spacing: -0.400px; }
.dtab { height: 25px; align-self: end; display: grid; grid-template-columns: 24px 88px 14px; align-items: center; padding-left: 11px; border: solid #fff; border-width: 1px 1px 0 1px; white-space: nowrap; }
.dtab.on { height: 27px; grid-template-columns: 24px 131px 14px; border-right: 2px solid #777; align-self: start; padding-left: 13px; }
.canvas { flex: 1; min-height: 0; border: solid #777; border-width: 2px 2px 1px 2px; margin: 0 0 1px 2px; background: #fff; }
.cname { font: bold 33px "Liberation Sans", Arial, sans-serif; }

.right { grid-column: 5; display: flex; flex-direction: column; border-left: 1px solid #777; }
.bvh { height: 22px; grid-template-columns: 84px 4px 16px 14px; }
.bvh svg:nth-child(2) { grid-column: 3; }
.bird { flex: 1; background: #fff; border: 1px solid #000; }

.status { height: 35px; flex: none; display: grid; grid-template-columns: 145px 799px 709px 89px 4px 33px 3px 103px 3px 32px; padding-top: 2px; border-bottom: 1px solid #fff; letter-spacing: 0.150px; white-space: nowrap; }
.cell { border: 1px solid #fff; border-top-color: #a0a0a0; border-left-color: #a0a0a0; height: 31px; }
.name { padding-left: 1px; line-height: 31px; letter-spacing: -0.170px; }
.zoom { grid-column: 3; text-align: right; padding-right: 8px; line-height: 31px; letter-spacing: 0.350px; }
.fit { grid-column: 4; height: 30px; margin: 0 0 0 1px; border: solid #777; border-width: 1px 2px 2px 1px; border-left-color: #fff; border-top-color: #fff; display: grid; grid-template-columns: 31px 1fr; line-height: 28px; text-align: center; }
.fit span + span { border-left: 1px solid #999; margin: 4px 0; line-height: 20px; letter-spacing: 0.350px; }
.zo { grid-column: 6; display: grid; place-items: center; }
.slider { grid-column: 8; display: grid; align-items: center; background: linear-gradient(#888, #888) 1px 14px / 98px 2px no-repeat; }
.slider i { width: 14px; height: 29px; margin-left: 37px; background: #efefef; border: 1px solid #fff; border-right: 2px solid #777; border-bottom: 2px solid #777; }
.zi { grid-column: 10; display: grid; place-items: center; padding-left: 2px; }

.taskbar { height: 61px; flex: none; display: flex; align-items: center; padding-bottom: 1px; border-top: 1px solid #444; color: #eee; background: linear-gradient(90deg, #201f27 0, #211d30 180px, #251b38 280px, #241c30 400px, #201e2a 490px, #2b2022 610px, #292021 720px, #222 960px); }
.weather { width: 501px; padding-left: 14px; }
.app { width: 57px; height: 52px; flex: none; display: grid; place-items: center; position: relative; }
.search { width: 286px; height: 41px; margin: 0 2px 0 4px; border-radius: 21px; background: #403a3c; display: flex; align-items: center; gap: 13px; padding-left: 15px; font-size: 17px; color: #d2d0d0; }
.search span { letter-spacing: -0.200px; }
.apps { display: flex; width: 692px; }
.run::after { content: ""; position: absolute; bottom: 0; width: 8px; height: 4px; border-radius: 2px; background: #999; }
.run { margin-left: 0.300px; }
.wa { margin-left: 3px; }
.active::before { content: ""; position: absolute; inset: 0 3px; border-radius: 6px; background: #303030; border: 1px solid #383838; }
.active svg { position: relative; }
.active::after { width: 21px; background: #27e9f5; }
.tray { flex: 1; height: 60px; display: flex; align-items: center; font-size: 15px; line-height: 21px; letter-spacing: -0.200px; }
.cloud { margin-left: 23px; }
.lang { width: 50px; margin-left: 11px; text-align: center; }
.net { margin-left: 13px; }
.vol { margin-left: 8px; }
.bat { margin-left: 10px; }
.clock { flex: 1; text-align: right; white-space: nowrap; letter-spacing: 0.350px; }
.badge { width: 24px; height: 22px; margin: 0 25px 0 7px; border-radius: 11px; background: #27e9f5; color: #122; font-size: 13px; line-height: 22px; text-align: center; }
```
